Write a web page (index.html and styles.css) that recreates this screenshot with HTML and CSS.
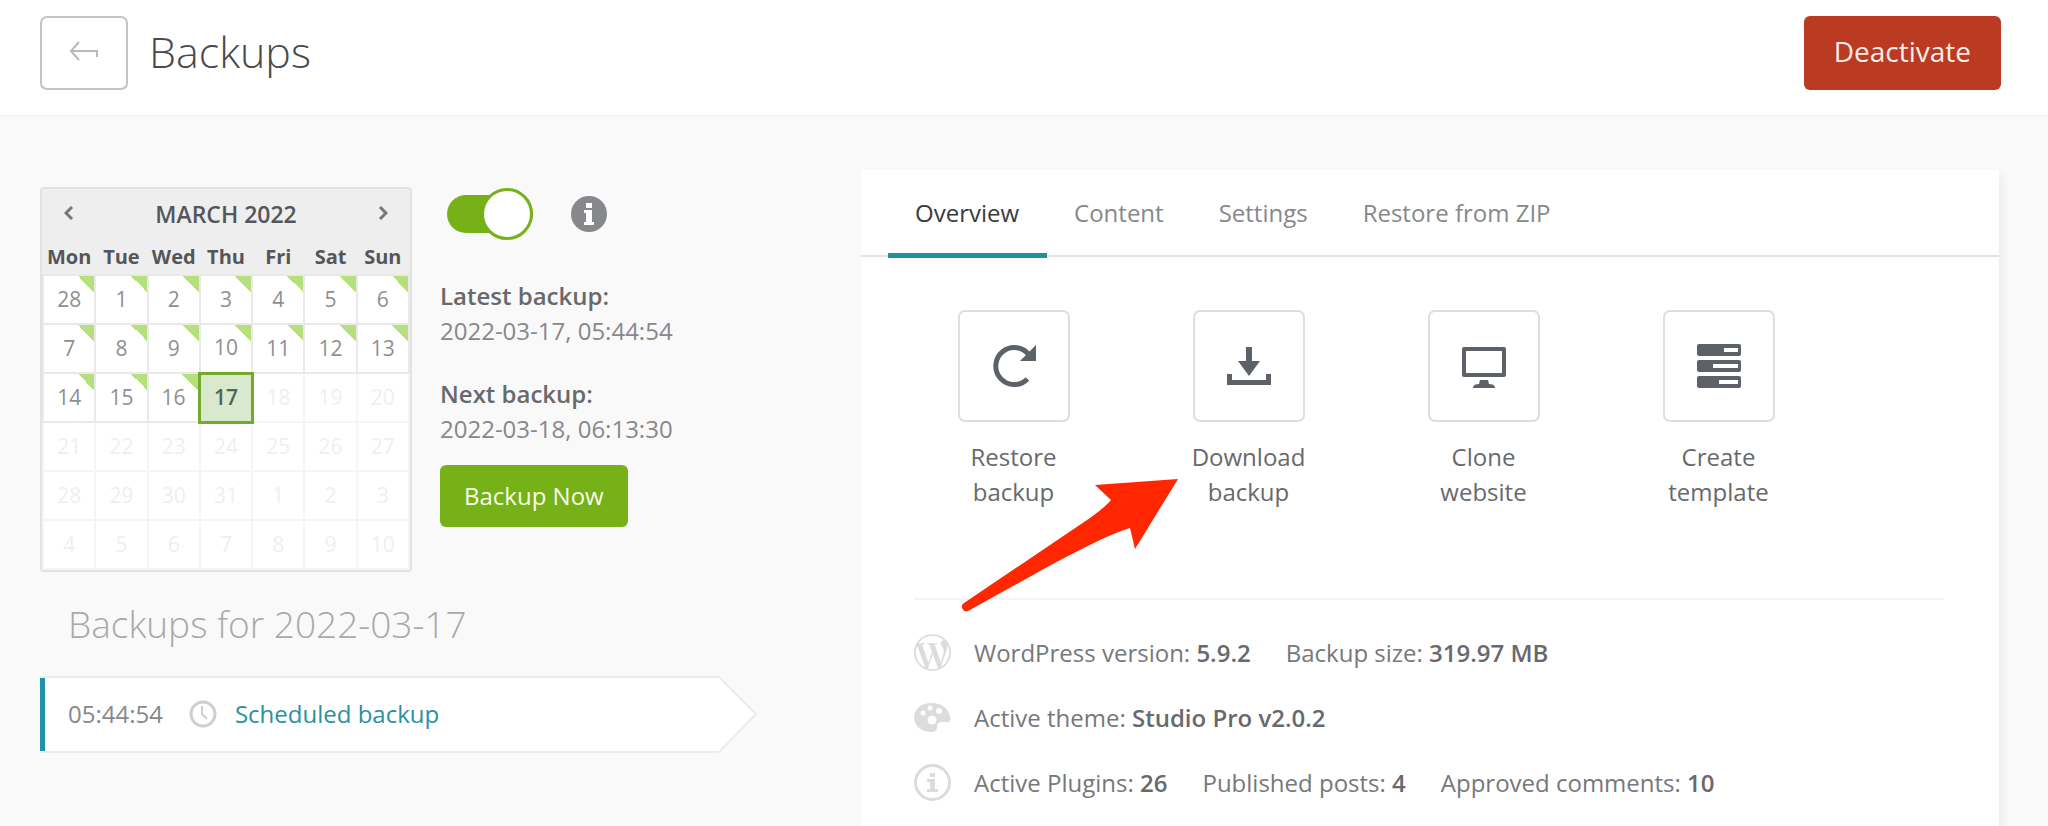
FILE: index.html
```html
<!DOCTYPE html>
<html lang="en">
<head>
<meta charset="utf-8">
<title>Backups</title>
<meta name="viewport" content="width=device-width, initial-scale=1">
<link rel="stylesheet" href="styles.css">
</head>
<body>
<header class="topbar">
  <button class="back" type="button" aria-label="Back">
    <svg width="30" height="20" viewBox="0 0 30 20" fill="none" stroke="currentColor" stroke-width="2"><path d="M10 1 2 10l8 9M2 10h26v6"/></svg>
  </button>
  <h1 class="title">Backups</h1>
  <button class="deactivate" type="button">Deactivate</button>
</header>

<main class="main">
  <section class="side">
    <div class="overview">
      <div class="calendar">
        <div class="cal-head">
          <button class="cal-nav" type="button" aria-label="Previous month"><svg width="10" height="14" viewBox="0 0 10 14" fill="none" stroke="currentColor" stroke-width="3"><path d="M8 1 2 7l6 6"/></svg></button>
          <span class="cal-title">MARCH 2022</span>
          <button class="cal-nav" type="button" aria-label="Next month"><svg width="10" height="14" viewBox="0 0 10 14" fill="none" stroke="currentColor" stroke-width="3"><path d="m2 1 6 6-6 6"/></svg></button>
        </div>
        <table class="days">
          <thead>
            <tr><th>Mon</th><th>Tue</th><th>Wed</th><th>Thu</th><th>Fri</th><th>Sat</th><th>Sun</th></tr>
          </thead>
          <tbody>
            <tr><td class="has">28</td><td class="has">1</td><td class="has">2</td><td class="has">3</td><td class="has">4</td><td class="has">5</td><td class="has">6</td></tr>
            <tr><td class="has">7</td><td class="has">8</td><td class="has">9</td><td class="has">10</td><td class="has">11</td><td class="has">12</td><td class="has">13</td></tr>
            <tr><td class="has">14</td><td class="has">15</td><td class="has">16</td><td class="today">17</td><td class="off">18</td><td class="off">19</td><td class="off">20</td></tr>
            <tr class="off"><td>21</td><td>22</td><td>23</td><td>24</td><td>25</td><td>26</td><td>27</td></tr>
            <tr class="off"><td>28</td><td>29</td><td>30</td><td>31</td><td>1</td><td>2</td><td>3</td></tr>
            <tr class="off"><td>4</td><td>5</td><td>6</td><td>7</td><td>8</td><td>9</td><td>10</td></tr>
          </tbody>
        </table>
      </div>
      <div class="status">
        <div class="switch-row">
          <input class="switch" type="checkbox" checked aria-label="Automatic backups">
          <svg class="info" width="36" height="36" viewBox="0 0 36 36"><circle cx="18" cy="18" r="18" fill="#87888c"/><path fill="#fff" d="M15 7h6v5h-6zM13 14h8v12h2v3H13v-3h2v-9h-2z"/></svg>
        </div>
        <dl class="times">
          <dt>Latest backup:</dt><dd>2022-03-17, 05:44:54</dd>
          <dt>Next backup:</dt><dd>2022-03-18, 06:13:30</dd>
        </dl>
        <button class="backup-now" type="button">Backup Now</button>
      </div>
    </div>
    <h2 class="list-title">Backups for 2022-03-17</h2>
    <div class="entry">
      <div class="entry-body">
        <span class="entry-time">05:44:54</span>
        <svg width="28" height="28" viewBox="0 0 28 28" fill="none" stroke="#cfcfcf" stroke-width="2"><circle cx="14" cy="14" r="12" stroke-width="3"/><path d="M13 6v8l5 5"/></svg>
        <a class="entry-link" href="#">Scheduled backup</a>
      </div>
      <svg class="entry-tip" width="38" height="77" viewBox="0 0 38 77"><path d="M0 1 37 38 0 76" fill="#fff" stroke="#ececec" stroke-width="2"/></svg>
    </div>
  </section>

  <section class="panel">
    <nav class="tabs">
      <a class="tab active" href="#">Overview</a>
      <a class="tab" href="#">Content</a>
      <a class="tab" href="#">Settings</a>
      <a class="tab" href="#">Restore from ZIP</a>
    </nav>
    <div class="actions">
      <button class="action" type="button">
        <span class="tile"><svg width="44" height="44" viewBox="0 0 44 44"><path d="M37.500 11.500A18.500 18.500 0 1 0 35.500 35" fill="none" stroke="#5d6269" stroke-width="5"/><path d="M44 1v16H28z" fill="#5d6269"/></svg></span>
        <span class="label">Restore<br>backup</span>
      </button>
      <button class="action" type="button">
        <span class="tile"><svg width="44" height="44" viewBox="0 0 44 44" fill="#5d6269"><path d="M19 3h6v14h8L22 32 11 17h8zM0 30h5v6h34v-6h5v11H0z"/></svg></span>
        <span class="label">Download<br>backup</span>
      </button>
      <button class="action" type="button">
        <span class="tile"><svg width="44" height="44" viewBox="0 0 44 44" fill="#5d6269"><path fill-rule="evenodd" d="M2 3h40q2 0 2 2v26q0 2-2 2H2q-2 0-2-2V5q0-2 2-2zm2 4v22h36V7zM18 36h8l1 4q5 0 6 3v1H11v-1q1-3 6-3z"/></svg></span>
        <span class="label">Clone<br>website</span>
      </button>
      <button class="action" type="button">
        <span class="tile"><svg width="44" height="44" viewBox="0 0 44 44"><g fill="#5d6269"><rect width="44" height="12" rx="2"/><rect y="16" width="44" height="12" rx="2"/><rect y="32" width="44" height="12" rx="2"/></g><path d="M27 4h14v4H27zM16 20h25v4H16zM22 36h19v4H22z" fill="#fff"/></svg></span>
        <span class="label">Create<br>template</span>
      </button>
      <svg class="pointer" width="220" height="138" viewBox="0 0 220 138"><path d="M219 3 136 9 152 24C147 30 138 37 128 44L5 127a4.500 4.500 0 0 0 4 8L74 99Q100 84 141 64 158 56 171 52L176 73Z" fill="#ff2600"/></svg>
    </div>
    <ul class="facts">
      <li>
        <svg width="37" height="37" viewBox="0 0 24 24" fill="#dcdcdc"><path d="M21.469 6.825c.84 1.537 1.318 3.3 1.318 5.175 0 3.979-2.156 7.456-5.363 9.325l3.295-9.527c.615-1.54.82-2.771.82-3.864 0-.405-.026-.78-.07-1.11m-7.981.105c.647-.03 1.232-.105 1.232-.105.582-.075.514-.93-.067-.899 0 0-1.755.135-2.88.135-1.064 0-2.85-.15-2.85-.15-.585-.03-.661.855-.075.885 0 0 .54.061 1.125.09l1.68 4.605-2.37 7.08L5.354 6.9c.649-.03 1.234-.1 1.234-.1.585-.075.516-.93-.065-.896 0 0-1.746.138-2.874.138-.2 0-.438-.008-.69-.015C4.911 3.15 8.235 1.215 12 1.215c2.809 0 5.365 1.072 7.286 2.833-.046-.003-.091-.009-.141-.009-1.06 0-1.812.923-1.812 1.914 0 .89.513 1.643 1.06 2.531.411.72.89 1.643.89 2.977 0 .915-.354 1.994-.821 3.479l-1.075 3.585-3.9-11.61.001.014zM12 22.784c-1.059 0-2.081-.153-3.048-.437l3.237-9.406 3.315 9.087c.024.053.05.101.078.149-1.12.393-2.325.609-3.582.609M1.211 12c0-1.564.336-3.05.935-4.39L7.29 21.709C3.694 19.96 1.212 16.271 1.211 12M12 0C5.385 0 0 5.385 0 12s5.385 12 12 12 12-5.385 12-12S18.615 0 12 0"/></svg>
        <span>WordPress version: <b>5.9.2</b></span>
        <span>Backup size: <b>319.97 MB</b></span>
      </li>
      <li>
        <svg width="37" height="37" viewBox="0 0 37 37"><path d="M18 4C7 4 0 10 0 18.500 0 27 8 33 17 33c4 0 6-2 6-5 0-4 2-5 6-5h5c3 0 3-3 2-6C34 9 27 4 18 4z" fill="#dcdcdc"/><g fill="#fff"><circle cx="9" cy="14" r="2.500"/><circle cx="16" cy="9" r="2.500"/><circle cx="25" cy="12" r="3"/><circle cx="18" cy="21" r="4.500"/></g></svg>
        <span>Active theme: <b>Studio Pro v2.0.2</b></span>
      </li>
      <li>
        <svg width="37" height="37" viewBox="0 0 37 37"><circle cx="18.500" cy="18.500" r="17" fill="none" stroke="#dcdcdc" stroke-width="3"/><path fill="#dcdcdc" d="M16 9h5v4h-5zM13 15h8v10h3v3H13v-3h3v-7h-3z"/></svg>
        <span>Active Plugins: <b>26</b></span>
        <span>Published posts: <b>4</b></span>
        <span>Approved comments: <b>10</b></span>
      </li>
    </ul>
  </section>
</main>
</body>
</html>
```
FILE: styles.css
```css
*, *::before { box-sizing: border-box; }

body {
  display: flex;
  flex-direction: column;
  min-height: 100vh;
  margin: 0;
  background: #f9f9f9;
  color: #87888c;
  font: 24px/35px "Open Sans", "Noto Sans", sans-serif;
}

button {
  padding: 0;
  border: 0;
  background: none;
  color: inherit;
  font: inherit;
}

svg { display: block; flex: none; }
h1, h2, dl, dd, ul { margin: 0; padding: 0; }

.topbar {
  display: flex;
  align-items: center;
  gap: 21px;
  padding: 16px 47px 25px 40px;
  background: #fff;
  border-bottom: 1px solid #f1f1f1;
}

.back {
  display: grid;
  place-items: center;
  width: 88px;
  height: 74px;
  padding-bottom: 4px;
  border: 2px solid #c4c4c4;
  border-radius: 7px;
  color: #b9b9b9;
}

.title {
  flex: 1;
  padding-bottom: 2px;
  color: #4a4a4c;
  font-size: 43px;
  font-weight: 300;
  line-height: 60px;
}

.deactivate {
  height: 74px;
  padding: 0 30px 4px;
  border-radius: 6px;
  background: #ba3a22;
  color: #fdeee6;
  font-size: 28px;
}

.main {
  display: grid;
  flex: 1;
  grid-template-columns: minmax(0, 821fr) minmax(0, 1138fr);
  padding: 54px 49px 0 40px;
}

.side { padding-top: 17px; }
.overview { display: flex; gap: 28px; }

.calendar {
  width: 372px;
  border: 2px solid #e2e2e2;
  border-radius: 4px;
  background: #eee;
}

.cal-head {
  display: flex;
  align-items: center;
  justify-content: space-between;
  height: 50px;
  padding: 0 22px;
}

.cal-title { color: #55565a; font-size: 23px; font-weight: 600; }
.cal-nav { color: #77787c; padding-bottom: 2px; }

.days {
  width: 100%;
  table-layout: fixed;
  border-collapse: collapse;
}

.days th {
  height: 36px;
  padding: 0;
  color: #55565a;
  font-size: 20px;
  line-height: 34px;
}

.days td {
  height: 49px;
  padding: 0 0 2px;
  border: 2px solid #e9e9e9;
  background: #fff;
  color: #8f8f92;
  font-size: 21px;
  line-height: 34px;
  text-align: center;
}

.days .has { background: linear-gradient(45deg, transparent 50%, #b5e07c 50%) top right / 16px 16px no-repeat #fff; }
.days .off, .days .off td { border-color: #f5f5f5; color: #efefef; }

.days .today {
  border: 3px solid #74a92b;
  background: #d8e9cd;
  color: #55625a;
  font-weight: 600;
}

.switch-row { display: flex; align-items: center; gap: 38px; height: 53px; padding-left: 7px; }

.switch {
  position: relative;
  width: 86px;
  height: 38px;
  margin: 0;
  appearance: none;
  border-radius: 19px;
  background: #76b117;
}

.switch::before {
  content: "";
  position: absolute;
  top: -7px;
  right: 0;
  width: 52px;
  height: 52px;
  border: 3px solid #76b117;
  border-radius: 50%;
  background: #fff;
}

.times { padding-top: 38px; }
.times dt { color: #68696c; font-weight: 600; }
.times dd { margin-bottom: 28px; }

.backup-now {
  height: 62px;
  margin-top: -9px;
  padding: 0 24px 2px;
  border-radius: 6px;
  background: #76b117;
  color: #f7fbe9;
}

.list-title {
  padding: 26px 28px;
  color: #a9a9a9;
  font-size: 37px;
  font-weight: 300;
  line-height: 52px;
}

.entry { display: flex; margin-right: 104px; }

.entry-body {
  display: flex;
  flex: 1;
  align-items: center;
  gap: 26px;
  height: 77px;
  padding: 0 0 2px 28px;
  border: solid #ececec;
  border-width: 2px 0;
  background: linear-gradient(#1f92a8, #1f92a8) left / 5px 100% no-repeat #fff;
}

.entry-link { margin-left: -8px; color: #2b909f; text-decoration: none; }

.panel {
  background: #fff;
  box-shadow: 4px 4px 8px rgba(0, 0, 0, .05);
}

.tabs {
  display: flex;
  height: 87px;
  padding-left: 27px;
  border-bottom: 2px solid #e4e4e4;
}

.tab {
  height: 88px;
  padding: 25px 28px 0 27px;
  border-bottom: 5px solid transparent;
  color: #87888c;
  text-decoration: none;
}

.tab.active { border-color: #1f8fa2; color: #3a3a3c; }

.actions {
  position: relative;
  display: flex;
  margin: 0 55px 0 53px;
  padding: 53px 0 89px;
  border-bottom: 2px solid #f5f5f5;
}

.action {
  display: flex;
  flex-direction: column;
  align-items: center;
  gap: 17px;
  width: 235px;
  margin-left: -18px;
  margin-right: 18px;
  color: #68696c;
}

.tile {
  display: grid;
  place-items: center;
  width: 112px;
  height: 112px;
  border: 2px solid #dedede;
  border-radius: 7px;
}

.pointer { position: absolute; left: 45px; bottom: -16px; }

.facts { padding: 34px 53px; list-style: none; }
.facts li { display: flex; align-items: center; gap: 35px; height: 37px; margin-bottom: 28px; color: #77787a; }
.facts svg { margin-right: -12px; }
.facts b { color: #68696c; font-weight: 600; }
```
